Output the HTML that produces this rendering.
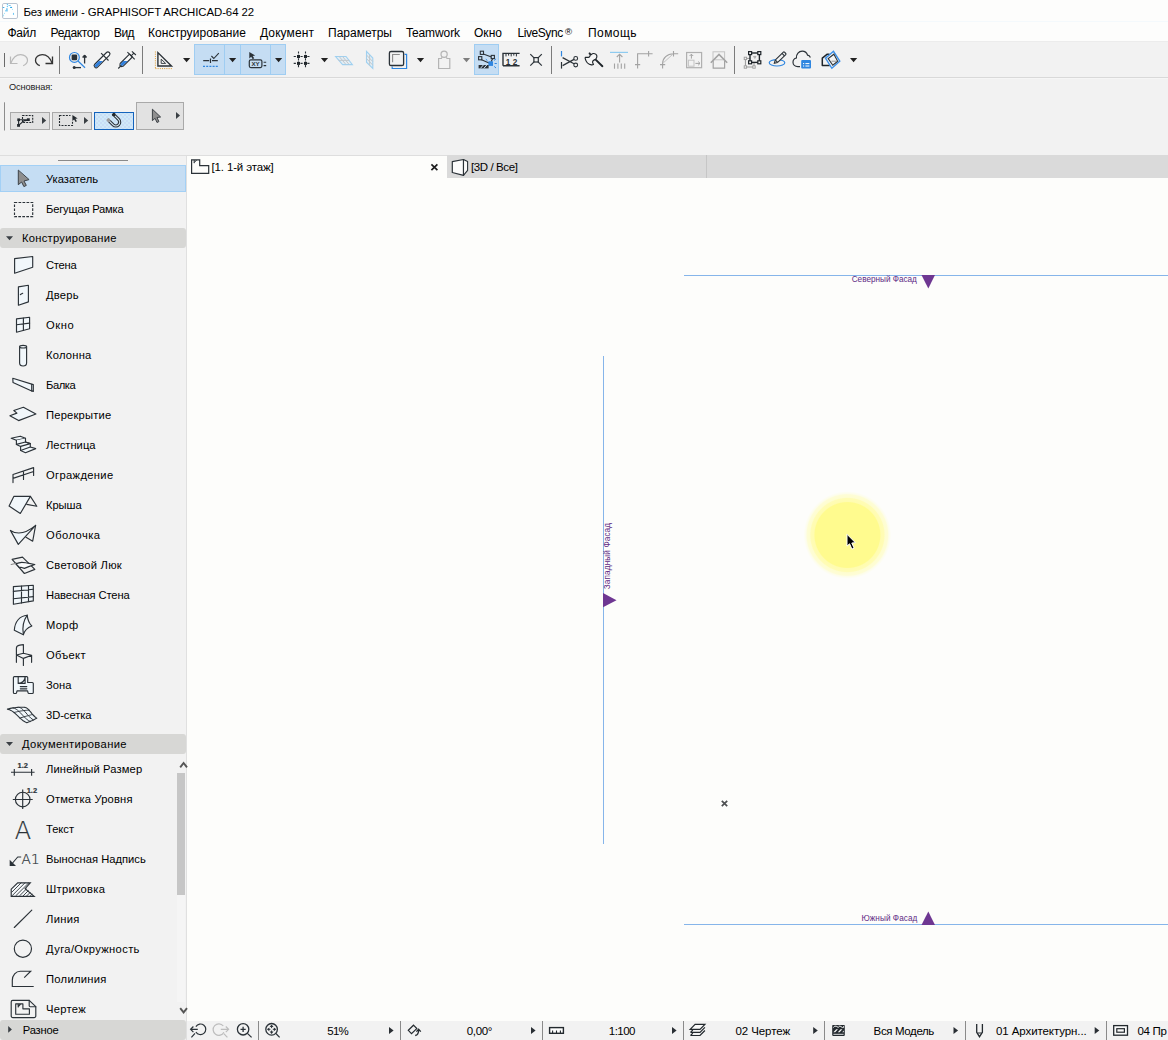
<!DOCTYPE html>
<html lang="ru"><head><meta charset="utf-8"><title>ARCHICAD</title>
<style>
html,body{margin:0;padding:0;}
body{width:1168px;height:1040px;overflow:hidden;background:#fdfdfb;font-family:"Liberation Sans",sans-serif;}
#app{position:relative;width:1168px;height:1040px;overflow:hidden;background:#fdfdfb;}
.b{position:absolute;box-sizing:border-box;}
.t{position:absolute;white-space:nowrap;line-height:16px;height:16px;}
#ov{position:absolute;left:0;top:0;}

</style></head>
<body>
<div id="app">
<!-- title + menu -->
<div class="b" style="left:0;top:0;width:1168px;height:42px;background:#fdfdfc"></div>
<div class="b" style="left:0;top:21px;width:1168px;height:1px;background:#f4f9fc"></div>
<!-- toolbar -->
<div class="b" style="left:0;top:41px;width:1168px;height:1px;background:#ececec"></div>
<div class="b" style="left:0;top:42px;width:1168px;height:114px;background:#f2f2f2"></div>
<div class="b" style="left:0;top:77px;width:1168px;height:1px;background:#d9d9d9"></div>
<div class="b" style="left:0;top:78px;width:1168px;height:1px;background:#f6f6f6"></div>
<div class="b" style="left:0;top:155px;width:1168px;height:1px;background:#dedede"></div>
<!-- toolbar active buttons -->
<div class="b" style="left:194px;top:44px;width:92px;height:31px;background:#c5ddf3;border:1px solid #9fcdf2"></div>
<div class="b" style="left:224px;top:44px;width:1px;height:31px;background:#9fcdf2"></div>
<div class="b" style="left:240px;top:44px;width:1px;height:31px;background:#9fcdf2"></div>
<div class="b" style="left:270px;top:44px;width:1px;height:31px;background:#9fcdf2"></div>
<div class="b" style="left:474px;top:44px;width:25px;height:31px;background:#c5ddf3;border:1px solid #9fcdf2"></div>
<!-- left toolbox -->
<div class="b" style="left:0;top:156px;width:187px;height:884px;background:#f2f2f2;border-right:1px solid #e0e0e0"></div>
<div class="b" style="left:58px;top:160px;width:70px;height:1px;background:#8a8a8a"></div>
<div class="b" style="left:0;top:165px;width:186px;height:27px;background:#c5ddf3;border:1px solid #a3d0f5"></div>
<div class="b" style="left:0;top:228px;width:186px;height:20px;background:#d7d7d5;border-radius:3px"></div>
<div class="b" style="left:0;top:734px;width:186px;height:20px;background:#d7d7d5;border-radius:3px"></div>
<div class="b" style="left:0;top:1020px;width:186px;height:20px;background:#d7d7d5;border-radius:3px"></div>
<!-- toolbox scrollbar -->
<div class="b" style="left:177px;top:895px;width:8px;height:107px;background:#f5f5f5"></div>
<div class="b" style="left:177px;top:773px;width:8px;height:122px;background:#c6c6c6"></div>
<!-- tab bar -->
<div class="b" style="left:187px;top:156px;width:260px;height:22px;background:#fdfdfb"></div>
<div class="b" style="left:447px;top:155px;width:721px;height:23px;background:#dadada"></div>
<div class="b" style="left:706px;top:155px;width:1px;height:23px;background:#c6c6c6"></div>
<!-- status bar -->
<div class="b" style="left:187px;top:1021px;width:981px;height:19px;background:#f2f2f2"></div>

<svg id="ov" width="1168" height="1040" viewBox="0 0 1168 1040" fill="none">
<!-- canvas lines -->
<g shape-rendering="crispEdges" stroke="#86b5ea" stroke-width="1">
<line x1="684" y1="275.5" x2="1168" y2="275.5"/>
<line x1="684" y1="924.5" x2="1168" y2="924.5"/>
<line x1="603.5" y1="356" x2="603.5" y2="844"/>
</g>
<g fill="#6e3792">
<polygon points="921.5,275 935,275 928.3,288.5"/>
<polygon points="921.5,925 935,925 928.3,911.5"/>
<polygon points="603,593 603,607.3 616.5,600.2"/>
</g>
<!-- cursor highlight -->
<defs><radialGradient id="yg" cx="0.5" cy="0.5" r="0.5"><stop offset="0" stop-color="#fffb8e"/><stop offset="0.74" stop-color="#fffb8e"/><stop offset="0.765" stop-color="#fffcb0"/><stop offset="0.835" stop-color="#fffcb6"/><stop offset="0.86" stop-color="#fefdd0"/><stop offset="0.92" stop-color="#fefdd6"/><stop offset="0.945" stop-color="#fdfdea"/><stop offset="1" stop-color="#fdfdfb"/></radialGradient></defs>
<circle cx="847.4" cy="535" r="43.800" fill="url(#yg)"/>


<!-- ===== title icon ===== -->
<rect x="2.500" y="3.500" width="15" height="15" rx="1.400" fill="#fff" stroke="#b9c3d0" stroke-width="1"/>
<g fill="#6ec6f4"><circle cx="7.400" cy="4.500" r=".700"/><circle cx="7.400" cy="6.500" r=".700"/><ellipse cx="3.600" cy="7.500" rx=".900" ry=".600" fill="#2ea8e6"/><ellipse cx="9.700" cy="5.500" rx="1.300" ry=".500"/><ellipse cx="11.100" cy="7.400" rx="1.100" ry=".600" fill="#2ea8e6"/>
<path d="M6 8.200h1.800v3.400h-2.600v-1.600h.8z" fill="#7fcdf6"/><circle cx="12.500" cy="9.400" r=".600" fill="#a6e4f8"/><circle cx="4.500" cy="13.400" r=".600" fill="#a6e4f8"/><ellipse cx="13.500" cy="13.900" rx=".600" ry="1.100"/><ellipse cx="3.500" cy="15.600" rx=".600" ry="1" fill="#a6e4f8"/></g>
<!-- ===== main toolbar ===== -->
<g stroke-linecap="butt" stroke-linejoin="miter">
<!-- grips & separators -->
<path d="M4.5 53v14" stroke="#6a6a6a" stroke-width="1"/>
<path d="M59.5 46v28M142.5 46v28M551.5 46v28M734.5 46v28" stroke="#7b7b7b" stroke-width="1"/>
<!-- undo (disabled) -->
<path d="M10.5 56.5v7h7" stroke="#b9b9b9" stroke-width="1.2"/>
<path d="M10.8 63.2C13 57.5 17 54.6 20.6 54.6c4 0 6.9 2.6 6.9 5.7 0 2.3-1.7 4.3-4.3 5.4" stroke="#b9b9b9" stroke-width="1.2"/>
<!-- redo -->
<path d="M52.5 56.5v7h-7" stroke="#333" stroke-width="1.3"/>
<path d="M52.2 63.2C50 57.5 46 54.6 42.4 54.6c-4 0-6.9 2.6-6.9 5.7 0 2.3 1.7 4.3 4.3 5.4" stroke="#333" stroke-width="1.3"/>
<!-- find & select -->
<circle cx="74.4" cy="57.4" r="4.9" stroke="#2f86e0" stroke-width="1.2"/>
<rect x="71.6" y="54.6" width="5.6" height="5.6" rx="1.2" fill="#2b3238"/>
<path d="M78 61l7 6.8" stroke="#2f86e0" stroke-width="1.2"/>
<path d="M84.6 63.5v-7" stroke="#2b3238" stroke-width="1.3"/><circle cx="84.6" cy="56.2" r="1.5" fill="#2b3238"/><path d="M82.3 57h4.6" stroke="#2b3238" stroke-width="1.2"/>
<path d="M81 67.6h-7" stroke="#2b3238" stroke-width="1.3"/><circle cx="74.2" cy="67.6" r="1.5" fill="#2b3238"/>
<!-- eyedropper -->
<defs><clipPath id="liq"><rect x="90" y="61.100" width="50" height="10"/></clipPath></defs>
<g transform="translate(102.050 59.800) rotate(45)">
<rect x="-2" y="-10.300" width="4" height="20.600" rx="2" fill="#fafafa" stroke="#2b3238" stroke-width="1.150"/>
</g>
<g clip-path="url(#liq)"><g transform="translate(102.050 59.800) rotate(45)"><rect x="-1.450" y="-9" width="2.900" height="18.750" rx="1.450" fill="#2f7fdc"/></g></g>
<path d="M101.100 53.100l7.400 7.400" stroke="#2b3238" stroke-width="1.150"/>
<!-- syringe -->
<g transform="translate(125.900 60.600) rotate(45)">
<path d="M-2 -7.100h4v13.200l-1.200 1.600h-1.600l-1.200-1.600z" fill="#fafafa" stroke="#2b3238" stroke-width="1.100" stroke-linejoin="round"/>
</g>
<g clip-path="url(#liq)"><g transform="translate(125.900 60.600) rotate(45)"><path d="M-1.450 -6h2.900v11.900l-.9 1.200h-1.100l-.9-1.200z" fill="#2f7fdc"/></g></g>
<path d="M127.400 52.200l7.300 7.200M131.100 55.800l2.800-2.700M131.900 51.300l4 3.700M121.300 65.400l-3 3.100" stroke="#2b3238" stroke-width="1.100"/>
<!-- set square -->
<path d="M157.9 52.6v13.4h13.6z" stroke="#2b3238" stroke-width="1.4" stroke-linejoin="miter"/>
<path d="M161.2 59.2v4.2h4.4z" stroke="#2b3238" stroke-width="0.9"/>
<path d="M155.4 51.5v17M155.4 68.6h17" stroke="#e09a2c" stroke-width="1" stroke-dasharray="1 1.2"/>
<!-- dropdown arrows -->
<g fill="#222">
<path d="M183 58h7.2l-3.6 4.2z"/><path d="M229 58h7.2l-3.6 4.2z"/><path d="M275 58h7.2l-3.6 4.2z"/><path d="M320.9 58h7.2l-3.6 4.2z"/><path d="M416.9 58h7.2l-3.6 4.2z"/><path d="M850 58h7.2l-3.6 4.2z"/>
</g>
<path d="M462.9 58h7.2l-3.6 4.2z" fill="#7e7e7e"/>
<!-- guide line button -->
<path d="M203.2 60.6h6M212 60.6h5.8M210.5 58.4v4.6" stroke="#2b3238" stroke-width="1.2"/>
<path d="M211.4 56l2.4 2.5 5-5.4" stroke="#2b3238" stroke-width="1.1"/>
<path d="M203 66.4h15.4" stroke="#2f86e0" stroke-width="1.1" stroke-dasharray="2 1.2"/>
<!-- tracker XY -->
<path d="M249.300 52v6.400l1.900-1.600 1.500 2.400 1.500-.9-1.500-2.400 2.500-.4z" fill="#2b3238"/>
<rect x="249.3" y="59.8" width="12.6" height="7.8" rx="1.5" stroke="#2b3238" stroke-width="1.2"/>
<path d="M263.6 62.2h2.6M263.6 65.6h2.6" stroke="#2b3238" stroke-width="1.1"/>
<!-- grid snap -->
<g stroke="#2b3238" stroke-width="1.1" stroke-dasharray="2.2 1.2">
<path d="M298.5 51.4v17.2M305.5 51.4v17.2M293.7 56.5h17M293.7 63.4h17"/>
</g>
<g fill="#1f252a"><rect x="297" y="55" width="3" height="3"/><rect x="304" y="55" width="3" height="3"/><rect x="297" y="61.9" width="3" height="3"/><rect x="304" y="61.9" width="3" height="3"/></g>
<!-- floor plane grid (disabled) -->
<path d="M335.6 56.5h10.4l6.4 8.1h-9.8z" stroke="#9fd0f0" stroke-width="1.1" fill="#e4eef5"/>
<path d="M339.2 56.5l6.8 8.1M342.6 56.5l6.6 8.1M338.6 60.4h10.6" stroke="#c2c8cc" stroke-width="1"/>
<path d="M366.5 51.4l6.3 6.6v10.5l-6.3-6.3z" stroke="#9fd0f0" stroke-width="1.1" fill="#e4eef5"/>
<path d="M369.6 54.8v10.6M366.5 55l6.3 6.6M366.5 58.6l6.3 6.5" stroke="#c2c8cc" stroke-width="1"/>
<!-- trace -->
<path d="M404.6 54.4h2v14.1h-14.4v-2" stroke="#2f86e0" stroke-width="1.2"/>
<rect x="389.4" y="51.5" width="14.2" height="14" rx="1.6" stroke="#2b3238" stroke-width="1.300"/>
<path d="M392.6 62.3v-7.8h7.2" stroke="#8c8c8c" stroke-width="1.1"/>
<!-- person (disabled) -->
<circle cx="444.1" cy="54.3" r="3.1" stroke="#b4b4b4" stroke-width="1.2"/>
<path d="M442 57.2l-.6 1.3h-2.8v10h11.2v-10h-2.8l-.6-1.3" stroke="#b4b4b4" stroke-width="1.2"/>
</g>


<text x="255.6" y="66" font-family="Liberation Sans, sans-serif" font-size="6.2" font-weight="bold" fill="#2b3238" text-anchor="middle">XY</text>
<!-- ===== toolbar part 2 ===== -->
<g stroke-linecap="butt">
<!-- element snap (active) -->
<path d="M482 53.6l10.8 4-0 0M481 57.4l0 0M481 59.4l8 3.5M492.6 58.8l-1.5 3" stroke="#2b3238" stroke-width="1.1"/>
<g fill="#c5ddf3" stroke="#2b3238" stroke-width="1.1"><rect x="480.3" y="51.2" width="3.2" height="3.2"/><rect x="491.2" y="55.4" width="3.2" height="3.2"/><rect x="478.6" y="56.6" width="3.2" height="3.2"/></g>
<rect x="488.4" y="61.3" width="4.6" height="4.6" fill="#2f86e0"/>
<path d="M494.2 60.4l1.8-1.6M494.6 63.5h2.2M494.2 66.4l1.8 1.6M487.4 60.6l-1.6-1.4" stroke="#2f86e0" stroke-width="1"/>
<path d="M478.6 65h10v3.4h-10z" fill="#2b3238"/>
<path d="M480.4 68.4l3-3.4M483.8 68.4l3-3.4" stroke="#c5ddf3" stroke-width="1"/>
<!-- ruler -->
<path d="M503 65.8v-12.4h16.6M503 65.8h16.6" stroke="#2b3238" stroke-width="1.4"/>
<path d="M506 53.4v3M508.6 53.4v2.2M511.2 53.4v3M513.8 53.4v2.2M516.4 53.4v3" stroke="#2b3238" stroke-width="1"/>
<!-- X -->
<path d="M530.3 54.1l4 4M541.8 54.1l-4 4M530.3 65.6l4-4M541.8 65.6l-4-4" stroke="#2b3238" stroke-width="1.2"/>
<rect x="533.9" y="57.6" width="4.4" height="4.4" stroke="#2b3238" stroke-width="1.2"/>
<!-- scissors -->
<path d="M561.5 51v5.4" stroke="#2f86e0" stroke-width="1.2"/><path d="M561.5 62v6.6" stroke="#2b3238" stroke-width="1.2"/>
<path d="M562.6 57.6l11.4 6.2M562.6 65.6l11.4-6.2" stroke="#2b3238" stroke-width="1.2"/>
<circle cx="575.7" cy="58.4" r="1.9" stroke="#2b3238" stroke-width="1.1"/><circle cx="575.7" cy="65" r="1.9" stroke="#2b3238" stroke-width="1.1"/>
<!-- axe -->
<path d="M595.4 59.4l7 6.800" stroke="#1f252a" stroke-width="1.900" stroke-linecap="round"/>
<path d="M589.600 53.400l1.400 1.300c1.200-1 2-1.300 2.900-1.200 1.300.2 2.400.7 2.800 1.700.5 1.300.1 2.500-.6 3.400l-1.200 1c-1 .4-1.900.8-2.200 1.600-.3.900-.2 1.900.8 3.100-.5.500-1.200.700-2 .600-2.600-.300-5.300-2.400-6.300-6.300 0-.5 0-.9.100-1.200h3.100c.8-.100 1.300-.600 1.600-1.300.3-.600.300-1.100.100-1.500z" stroke="#1f252a" stroke-width="1.150" stroke-linejoin="round" fill="#f6f6f6"/>
<circle cx="589.600" cy="53.500" r="1" fill="#1f252a"/>
<!-- adjust (disabled) -->
<path d="M610 52.4h18" stroke="#8ecbf0" stroke-width="1.2"/>
<path d="M619.6 62.4v-8M616.8 57l2.800-2.800 2.800 2.800" stroke="#a3a3a3" stroke-width="1.1"/>
<path d="M614.5 63.400v5.400M617.900 63.400v5.400M621.300 63.400v5.400M624.700 63.400v5.400" stroke="#a3a3a3" stroke-width="1.1"/>
<!-- fillet corner -->
<path d="M637.600 68.600v-14.800h15M648.600 51v5.400M635 64.600h5.200" stroke="#a3a3a3" stroke-width="1.1"/>
<!-- arc -->
<path d="M662.600 68.600v-5c0-5.400 4.600-9.800 10.800-9.800h4.800M673.500 51v5.400M660 64.600h5.200" stroke="#a3a3a3" stroke-width="1.1"/>
<path d="M663.400 62.800l9-8.200" stroke="#bdbdbd" stroke-width="0.9"/>
<!-- box arrows -->
<rect x="686.600" y="52.500" width="15" height="15.200" stroke="#b0b0b0" stroke-width="1.2"/>
<rect x="688.400" y="60.200" width="5.600" height="6" stroke="#c4c4c4" stroke-width="1"/>
<path d="M691.400 58.600v-4.400M689.600 56l1.800-1.800 1.800 1.800M695.400 63.400h4.600M698.200 61.600l1.800 1.800-1.800 1.800" stroke="#a3a3a3" stroke-width="1"/>
<!-- house -->
<rect x="713" y="51.800" width="11.600" height="8" stroke="#c4c4c4" stroke-width="1"/>
<path d="M710.800 62.800l8.200-8.400 8.200 8.400" stroke="#a3a3a3" stroke-width="1.600"/>
<path d="M713.200 61v7.200h11.400v-7.200" stroke="#a3a3a3" stroke-width="1.200"/>
<!-- select box -->
<rect x="745.400" y="58.400" width="8.600" height="8.600" stroke="#9a9a9a" stroke-width="1"/>
<g fill="#f2f2f2" stroke="#9a9a9a" stroke-width="0.9"><rect x="744.200" y="57.200" width="2.400" height="2.400"/><rect x="744.200" y="65.800" width="2.400" height="2.400"/><rect x="752.800" y="65.800" width="2.400" height="2.400"/></g>
<rect x="750" y="53" width="9.400" height="9.400" fill="#f2f2f2" stroke="#1f252a" stroke-width="1.400"/>
<g fill="#f2f2f2" stroke="#1f252a" stroke-width="1.200"><rect x="748.600" y="51.600" width="3" height="3"/><rect x="757.800" y="51.600" width="3" height="3"/><rect x="748.600" y="60.800" width="3" height="3"/><rect x="757.800" y="60.800" width="3" height="3"/></g>
<path d="M753.600 56.400h2.400l-1.200 2z" stroke="#9a9a9a" stroke-width="0.8"/>
<!-- pen with ellipse -->
<ellipse cx="777" cy="62.800" rx="7.800" ry="3.200" stroke="#2f86e0" stroke-width="1.200"/>
<g transform="translate(779.800 58) rotate(46)"><rect x="-1.700" y="-7.400" width="3.400" height="12" rx="0.800" fill="#f2f2f2" stroke="#2b3238" stroke-width="1.100"/><path d="M-1.700 4.600l1.700 3 1.700-3M-1.700 -4.800h3.400" stroke="#2b3238" stroke-width="1.100"/></g>
<!-- cloud -->
<path d="M800 66.600h-2.200c-2.800 0-4.800-2-4.800-4.400 0-2.200 1.600-3.800 3.400-4.200-.2-3.800 2.400-6.800 5.800-6.800 2.600 0 4.600 1.600 5.400 4 1.200.2 2.200 1 2.800 2.200" stroke="#2b3238" stroke-width="1.200"/>
<rect x="801.200" y="60" width="9.800" height="8.400" rx="1" fill="#2f86e0"/>
<path d="M803 63.600h1.200M805.400 63.600h4M803 66h1.200M805.400 66h4" stroke="#fff" stroke-width="1"/>
<!-- 3d box -->
<path d="M829.800 65.500h-7.500v-7.300l5-4h2.200" stroke="#1f252a" stroke-width="1.500" stroke-linejoin="round"/>
<path d="M833.500 51.300l6.300 9.900-7.950 7.100-6.350-10.100z" stroke="#3b8fe8" stroke-width="1.400" fill="#f4f4f4"/>
<path d="M833.900 54.200l3.800 7.100-4.900 3.900-4.600-6.700z" stroke="#2b3238" stroke-width="1.100"/>
<path d="M831.400 61.200h5.800" stroke="#8a8a8a" stroke-width="0.900"/>
</g>
<text x="505.700" y="64.700" font-family="Liberation Sans, sans-serif" font-size="8.200" font-weight="bold" fill="#2b3238" letter-spacing="2.600">12</text>


<!-- ===== info box ===== -->
<path d="M4.500 102.300v28.200" stroke="#8d8d8d" stroke-width="1"/>
<g fill="#e2e2e2" stroke="#a9a9a9" stroke-width="1">
<rect x="10.500" y="112.500" width="39" height="17"/>
<rect x="52.500" y="112.500" width="39" height="17"/>
<rect x="136.500" y="102.500" width="47" height="27"/>
</g>
<defs><pattern id="chk" width="4" height="4" patternUnits="userSpaceOnUse"><rect width="4" height="4" fill="#c9ddf6"/><rect width="2" height="2" fill="#cfeaf8"/><rect x="2" y="2" width="2" height="2" fill="#cfeaf8"/></pattern></defs>
<rect x="94.500" y="112.500" width="39" height="17" fill="url(#chk)" stroke="#1464bd" stroke-width="1"/>
<g fill="#3a3f44"><path d="M42 117v7l4.200-3.500z"/><path d="M84 117v7l4.200-3.500z"/><path d="M176 112v7l4-3.500z"/></g>
<!-- icon 1: polygon marquee -->
<rect x="22.500" y="115.500" width="10.200" height="7" stroke="#23292e" stroke-width="1.100" stroke-dasharray="2 1.100"/>
<path d="M18.600 119.700h9.800M18.600 119.700v5.600M18.600 125.300l5-4.300 4.200-.9" stroke="#23292e" stroke-width="1.100"/>
<g fill="#23292e"><rect x="17.300" y="118.400" width="2.700" height="2.700"/><rect x="26.900" y="118.300" width="2.900" height="2.700"/><rect x="17.100" y="124" width="2.900" height="2.800"/></g>
<!-- icon 2: marquee + cursor -->
<rect x="59.500" y="115.500" width="13" height="10" stroke="#23292e" stroke-width="1.100" stroke-dasharray="2 1.200"/>
<rect x="70.500" y="113.800" width="7" height="7.500" fill="#e2e2e2"/>
<path d="M72.400 115v6l1.700-1.500 1.500 2.500 1.300-.8-1.500-2.400 2.300-.4z" fill="#23292e"/>
<!-- icon 3: magnet -->
<g transform="translate(115.300 121.600) rotate(-45)">
<path d="M-3.800 -4.600v5.400a3.800 3.800 0 0 0 7.600 0v-5.400" stroke="#2b3238" stroke-width="3.200" fill="none"/>
<path d="M-3.800 -4.600v5.400a3.800 3.800 0 0 0 7.600 0v-5.400" stroke="#d9ecf8" stroke-width="1.100" fill="none"/>
<rect x="-5.600" y="-7.600" width="3.600" height="3.400" rx="1.200" fill="#9c9c9c"/>
<rect x="2" y="-7.600" width="3.600" height="3.400" rx="1.200" fill="#23292e"/>
</g>
<!-- icon 4: arrow cursor -->
<path d="M152.400 109.200v11.400l2.700-2.300 1.900 4.200 1.900-.9-1.900-4.100 3.600-.5z" fill="#8f8f8f" stroke="#3c4146" stroke-width="1" stroke-linejoin="round"/>


<!-- ===== tab bar icons ===== -->
<path d="M191.600 159.800h8.100v5.800h9v7.800h-17.100z" fill="#fdfdfb" stroke="#2b3238" stroke-width="1.200"/>
<path d="M194.200 163.200v-3.200M194.200 162.600l2.400-2.600" stroke="#2b3238" stroke-width="1"/>
<path d="M431.400 164.400l6 5.800M437.400 164.400l-6 5.800" stroke="#1d1d1d" stroke-width="1.700"/>
<path d="M452.300 161.600l11.200-2.100v15.900l-11.200-2.900z" fill="#fbfbfb" stroke="#2b3238" stroke-width="1.200" stroke-linejoin="round"/>
<path d="M463.500 159.500l4.100 2.100v8.700l-4.100 5.100z" fill="#fbfbfb" stroke="#2b3238" stroke-width="1.100" stroke-linejoin="round"/>
<!-- ===== status bar ===== -->
<g shape-rendering="crispEdges" stroke="#8a8a8a" stroke-width="1">
<path d="M258.500 1021v19M400.500 1021v19M542.500 1021v19M683.500 1021v19M824.500 1021v19M965.500 1021v19M1106.500 1021v19"/>
</g>
<g fill="#2a2f34"><path d="M389 1027v7l4.600-3.500z"/><path d="M531 1027v7l4.600-3.500z"/><path d="M672 1027v7l4.600-3.500z"/><path d="M813.200 1027v7l4.600-3.500z"/><path d="M953.500 1027v7l4.600-3.500z"/><path d="M1094.700 1027v7l4.600-3.500z"/></g>
<!-- prev zoom -->
<path d="M195.900 1026.600a5.300 5.300 0 1 1 0 5.400" stroke="#2b3238" stroke-width="1.200"/>
<path d="M190.600 1029.300h7.200M193.400 1026.500l-2.800 2.800 2.800 2.800M195 1033.400l-3.600 4" stroke="#2b3238" stroke-width="1.200"/>
<!-- next zoom (disabled) -->
<path d="M223.300 1026a5.700 5.700 0 1 0 0.600 6.200" stroke="#bdbdbd" stroke-width="1.200"/>
<path d="M220.800 1029.300h7.800M225.800 1026.500l2.800 2.800-2.800 2.800M223.800 1033.600l3.600 3.800" stroke="#bdbdbd" stroke-width="1.200"/>
<!-- zoom in -->
<circle cx="243.100" cy="1029.300" r="5.700" stroke="#2b3238" stroke-width="1.300"/>
<path d="M240.500 1029.300h5.200M243.100 1026.700v5.200M247.400 1033.400l4.200 4" stroke="#2b3238" stroke-width="1.300"/>
<!-- fit -->
<circle cx="271.600" cy="1029.300" r="5.800" stroke="#2b3238" stroke-width="1.300"/>
<path d="M275.800 1033.400l3.800 4" stroke="#2b3238" stroke-width="1.300"/>
<g fill="#2b3238"><path d="M271.600 1024.600l1.900 2.400h-3.800z"/><path d="M271.600 1034l1.900-2.400h-3.800z"/><path d="M266.900 1029.300l2.400-1.900v3.800z"/><path d="M276.300 1029.300l-2.400-1.900v3.800z"/></g><path d="M271.600 1026.500v1.600M271.600 1030.500v1.600M268.800 1029.300h1.600M272.800 1029.300h1.600" stroke="#2b3238" stroke-width="1"/>
<!-- rotation -->
<path d="M413.500 1025.200l3.300 3.400-5.300 5.100-3.200-3.400z" stroke="#23292e" stroke-width="1.200"/>
<path d="M415.200 1035.500c2.400-.4 3.500-2.400 3.400-5.800M416.400 1031.600l2.200-2.300 2.200 2.300" stroke="#23292e" stroke-width="1.300"/>
<!-- scale ruler -->
<rect x="549.600" y="1027.600" width="13.800" height="5.700" fill="#fff" stroke="#23292e" stroke-width="1.400"/>
<path d="M552.600 1033v-2.400M556.500 1033v-2.400M560.400 1033v-2.400" stroke="#23292e" stroke-width="1.100"/>
<!-- layers -->
<g stroke="#23292e" stroke-width="1.200" stroke-linejoin="miter">
<path d="M690.600 1035.500h9.400l4.900-5"/>
<path d="M690.600 1032.400h9.400l4.900-5"/>
<path d="M695.100 1024.300h9.800l-4.900 5h-9.800z" fill="#fafafa"/>
<path d="M692.800 1030l-2.200 2.400M692.800 1033.100l-2.200 2.400"/>
</g>
<!-- clapper -->
<rect x="832.200" y="1025" width="12.600" height="10.900" rx="0.800" fill="#23292e"/>
<path d="M833.400 1027.600l1.200-1.400h1.600l2.400 1.400M838.600 1026.200h1.600l2.400 1.400 1-.2v-1.200" stroke="#f4f4f4" stroke-width="1"/>
<path d="M833.400 1032.200l2.800-3h1.800l-2.800 3zM837.800 1032.200l2.800-3h1.800l-2.800 3zM842.200 1032.200l1.600-1.800v1.800z" fill="#f4f4f4"/>
<path d="M833.400 1034.300h10.200" stroke="#f4f4f4" stroke-width="0.900"/>
<!-- pen -->
<path d="M976.700 1024v8.400l2.800 4.300 2.900-4.300v-8.400" stroke="#23292e" stroke-width="1.300"/>
<path d="M977.400 1033h4.400" stroke="#23292e" stroke-width="1"/>
<!-- frame -->
<rect x="1113.700" y="1025.600" width="13.800" height="9.600" fill="#fafafa" stroke="#23292e" stroke-width="1.300"/>
<rect x="1116.800" y="1028.700" width="7.600" height="3.500" stroke="#23292e" stroke-width="1.200"/>


<!-- ===== toolbox icons ===== -->
<g stroke="#2b3238" stroke-width="1.150" stroke-linejoin="round" stroke-linecap="round" fill="none">
<!-- pointer -->
<path d="M18.300 170.500v14.200l3.300-2.700 2.300 4.600 2.400-1.200-2.300-4.400 4.700-1.300z" fill="#8e8e8e" stroke="#3c4146" stroke-width="1"/>
<!-- marquee -->
<rect x="14.500" y="202.500" width="18.200" height="14.100" stroke-dasharray="2.700 1.300" stroke-linecap="butt" stroke-linejoin="miter"/>
<!-- wall -->
<path d="M14.600 258.600l18.100-2.100v10.800l-18.100 5.900z" fill="#f1f7fb"/>
<!-- door -->
<path d="M18.400 286.900l10-1.600v16.600l-10 3.300z" fill="#f1f7fb"/><path d="M20.400 294.600l2.300-1.300"/>
<!-- window -->
<path d="M16.500 318.900l13.100-1.600v11.400l-13.100 3.500z" fill="#f1f7fb"/><path d="M23.400 318.100v12.400M16.500 324.800l13.100-1.700"/>
<!-- column -->
<path d="M19.600 346.700v16.300c0 1.700 1.500 3 3.500 3s3.500-1.300 3.500-3v-16.300" fill="#f1f7fb"/><ellipse cx="23.100" cy="346.700" rx="3.500" ry="1.300" fill="#f1f7fb"/>
<!-- beam -->
<path d="M12.800 378.300l20.500 6.300v6.800l-1.600-.5-18.700-8.500z" fill="#f1f7fb"/><path d="M31.700 384.300v6.600"/>
<!-- slab -->
<path d="M9.900 415.700l7-2.600-3.100-2.600 9.600-3.200 12.500 6.700-17.300 6.600z" fill="#f1f7fb"/>
<!-- stair -->
<path d="M11.200 438.200l9.100-2 5.200 2-9.100 2z" fill="#f1f7fb"/>
<path d="M16.400 440.200v4.200l4.200 2v4.100l4.900 2.200 10.200-4.100-5.400-1.600v-3.400l-4.800-1.600v-3.600" fill="#f1f7fb"/>
<path d="M16.400 444.400l9.100-2.400M20.600 446.400l9.700-2.800M20.600 450.500l9.700-3.500M25.500 442l4.800 1.600M30.300 447l-0 0"/>
<!-- railing -->
<path d="M13 482.600v-8.100l20.600-6.900v7.800M13 478.400l20.600-6.900M23.500 471v8.500"/>
<!-- roof -->
<path d="M9.100 506.100l4.700-9.700h16.600l-10.100 17.100z" fill="#f1f7fb"/><path d="M30.400 496.400l6.400 9.900-10-1.900"/>
<!-- shell -->
<path d="M10.400 530.400c6 4 15 3.500 25.200-5l-17.300 19z" fill="#f1f7fb"/><path d="M35.600 525.400l-2.900 15.800-6.700-3.900"/>
<!-- skylight -->
<path d="M12.100 559.400l10.400-2.300 12.350 12.300-10.450 4.100z"/>
<path d="M15.500 563.400c2.500.2 4-1.100 6.200-1.100 2.800 0 4.300.7 6 .8l7.150 1.400-5.450 1.900-5 2-3.500-1.100-1.500.2z" fill="#fbfcfd"/>
<path d="M11.200 564.500l4.300-1" stroke="#8a8a8a"/>
<!-- curtain wall -->
<path d="M13.400 586.600l19.900-1.300v15.600l-19.900 3.400z" fill="#f1f7fb"/><path d="M21.500 586.100v16.800M28.500 585.600v16M13.400 591.400l19.900-2.200M13.400 598.700l19.900-2.100"/>
<!-- morph -->
<path d="M27.200 615.200c-7.500.6-12.400 6.500-12.900 15.100l9.100 4.400c1-3.800 4-7 8.400-8.700-2.600-2.600-4.100-6.200-4.600-10.800z" fill="#f1f7fb"/><path d="M27.200 615.200c-3.800 5.500-5.200 12-3.800 19.500"/>
<!-- chair -->
<path d="M16.400 662.300v-14.400c0-1.600 1.200-2.400 3.400-2.800l3.600-.5v8.700M16.400 655l7-1.700 8.200 1.900-8.200 3.200zM23.400 658.400v7M31.600 655.200v7.100"/>
<!-- zone -->
<path d="M14.400 676.600h12.300c.6 0 1 .4 1 1v4.900h4.600c.6 0 1 .4 1 1v9c0 .6-.4 1-1 1h-3.300c-.5 0-.9-.3-1-.8l-.4-1.800h-10.600l-.4 1.800c-.1.500-.5.800-1 .8h-1.200c-.6 0-1-.4-1-1v-14.900c0-.6.400-1 1-1z" fill="#f1f7fb"/>
<path d="M18.200 676.800v6.600h6.900v-6.600M18.200 683.400c3.900 0 6.900-2.800 6.900-6.600M20.300 686.600h6.500M20.300 688.800h6.500"/>
<!-- mesh -->
<path d="M7.4 709.1L8.8 708.7L10.2 708.4L11.7 708.1L13.1 707.9L14.6 707.7L16.1 707.5L17.5 707.4L19.0 707.3L20.5 707.3L22.1 707.3L23.6 707.3L25.1 707.4L25.1 707.4L26.2 707.8L27.2 708.4L28.1 709.2L29.0 710.1L29.9 711.2L30.8 712.2L31.7 713.4L32.6 714.5L33.6 715.5L34.6 716.5L35.6 717.4L36.8 718.2L36.8 718.2L36.0 718.6L35.1 719.1L34.3 719.5L33.5 719.9L32.6 720.3L31.8 720.7L30.9 721.0L30.1 721.4L29.2 721.7L28.4 722.1L27.6 722.4L26.8 722.7L26.8 722.7L24.9 721.8L23.2 720.7L21.5 719.4L20.0 718.1L18.5 716.6L17.0 715.2L15.6 713.8L14.1 712.5L12.5 711.4L10.9 710.4L9.2 709.6L7.4 709.1z" fill="#f1f7fb" stroke-width="1.100"/>
<path d="M13.1 707.9L14.7 708.4L16.2 709.2L17.6 710.2L18.9 711.4L20.2 712.7L21.5 714.0L22.8 715.4L24.1 716.8L25.5 718.1L26.9 719.4L28.4 720.5L30.1 721.4M19.0 707.3L20.4 707.8L21.6 708.6L22.8 709.5L23.9 710.6L25.0 711.8L26.1 713.0L27.2 714.3L28.3 715.6L29.5 716.8L30.7 718.0L32.0 719.0L33.5 719.9M14.1 712.5L15.3 712.2L16.5 711.9L17.7 711.6L18.9 711.4L20.2 711.1L21.4 710.9L22.7 710.7L23.9 710.6L25.2 710.4L26.5 710.3L27.7 710.2L29.0 710.1M20.0 718.1L21.0 717.7L22.0 717.4L23.1 717.1L24.1 716.8L25.2 716.5L26.2 716.2L27.3 715.9L28.3 715.6L29.4 715.3L30.5 715.0L31.5 714.7L32.6 714.5" stroke-width="0.950"/>
<!-- dimension -->
<path d="M11 772.200h23.600M14.300 769v6.700M31.600 769v6.700" stroke-linecap="butt"/>
<!-- level -->
<circle cx="22.700" cy="799.500" r="7.300"/><path d="M12.800 799.500h19.900M22.700 789.500v19.500" stroke-linecap="butt"/>
<!-- label arrow -->
<path d="M12.600 863l5.100-6h3.500" stroke-linecap="butt"/><path d="M9.700 866v-6.200l6.300 6.200z" fill="#2b3238" stroke="none"/>
<!-- hatch -->
<path d="M11.200 896.400v-7.200l6.500-6.400h12.600l-5.200 5.800 9.100 7.800z" fill="#f6f9fb" stroke-linejoin="miter"/>
<path d="M11.800 892.200l9.300-9.300M12.200 895.600l12.600-12.600M15.800 895.800l12.800-12.800M19.600 895.800l6.800-6.800M23.200 895.800l5-5M26.800 895.800l3.400-3.400M30.400 895.800l1.600-1.600" stroke-width="0.900"/>
<!-- line -->
<path d="M14.300 927.500l17.500-17.300"/>
<!-- circle -->
<circle cx="22.900" cy="948.700" r="8.600"/>
<!-- polyline -->
<path d="M33.700 986.500h-21.400v-6.200c0-5 3.600-9.100 8-9.100h10.400l-6.500 6.500" stroke-linejoin="miter" stroke-linecap="butt"/>
<!-- drawing -->
<path d="M12.700 1000.400h16.500l6.600 6.300v9.400c0 .8-.7 1.500-1.500 1.500h-21.600c-.8 0-1.500-.7-1.500-1.500v-14.200c0-.8.700-1.500 1.500-1.500z"/><path d="M29.200 1000.400v5.400c0 .5.400.9.900.9h5.700"/>
<path d="M15.700 1003.800h7.200v5h6.500v5.400h-13.700zM18.200 1007v-3.200M18.200 1006.600l2.600-2.800"/>
</g>
<!-- section arrows -->
<g fill="#3a3f44"><path d="M6 236.200h7l-3.500 4z"/><path d="M6 742h7l-3.500 4z"/><path d="M8.200 1026v6.800l3.700-3.400z"/></g>
<!-- toolbox scroll chevrons -->
<path d="M180.200 767.400l3.400-4.400 3.400 4.400" stroke="#555" stroke-width="1.900"/>
<path d="M180.200 1008.200l3.400 4.200 3.400-4.200" stroke="#555" stroke-width="1.900"/>
<g font-family="Liberation Sans, sans-serif" font-weight="bold" font-size="7.500" fill="#2b3238" stroke="#2b3238" stroke-width="0.200">
<text x="17.500" y="768.100">1.2</text><text x="26.700" y="793">1.2</text></g>
<g font-family="DejaVu Sans Light, DejaVu Sans, sans-serif" font-weight="200" fill="#2b3238" stroke="#2b3238" stroke-width="0.220">
<text x="22.900" y="838.800" font-size="24" text-anchor="middle">A</text>
<text x="21.600" y="863.600" font-size="13.600">A1</text></g>


<!-- origin marker -->
<path d="M721.800 800.800l5.400 5.400M727.200 800.800l-5.400 5.400" stroke="#4d4f51" stroke-width="1.700"/>
<!-- mouse cursor -->
<path d="M847 534.300v11.800l2.600-2.300 2.300 5.300 2.200-1-2.300-5.100 3.600-.3z" fill="#000" stroke="#fff" stroke-width="1" stroke-linejoin="round"/>
</svg>

<div class="t" style="left:23.4px;top:3.7px;font-size:11.4px;letter-spacing:-0.076px;color:#000;">Без имени - GRAPHISOFT ARCHICAD-64 22</div>
<div class="t" style="left:7.5px;top:24.5px;font-size:12px;letter-spacing:-0.254px;color:#000;">Файл</div>
<div class="t" style="left:50.5px;top:24.5px;font-size:12px;letter-spacing:-0.332px;color:#000;">Редактор</div>
<div class="t" style="left:114.0px;top:24.5px;font-size:12px;letter-spacing:-0.573px;color:#000;">Вид</div>
<div class="t" style="left:148.0px;top:24.5px;font-size:12px;letter-spacing:0.047px;color:#000;">Конструирование</div>
<div class="t" style="left:260.0px;top:24.5px;font-size:12px;letter-spacing:0.096px;color:#000;">Документ</div>
<div class="t" style="left:328.0px;top:24.5px;font-size:12px;letter-spacing:0.003px;color:#000;">Параметры</div>
<div class="t" style="left:406.0px;top:24.5px;font-size:12px;letter-spacing:-0.086px;color:#000;">Teamwork</div>
<div class="t" style="left:474.0px;top:24.5px;font-size:12px;letter-spacing:0.027px;color:#000;">Окно</div>
<div class="t" style="left:517.5px;top:24.5px;font-size:12px;letter-spacing:-0.438px;color:#000;">LiveSync</div>
<div class="t" style="left:588.0px;top:24.5px;font-size:12px;letter-spacing:0.440px;color:#000;">Помощь</div>
<div class="t" style="left:565.0px;top:23.6px;font-size:9.6px;letter-spacing:0.122px;color:#000;">®</div>
<div class="t" style="left:9.0px;top:79.0px;font-size:9.2px;letter-spacing:-0.113px;color:#222;">Основная:</div>
<div class="t" style="left:211.5px;top:159.0px;font-size:11.5px;letter-spacing:-0.144px;color:#000;">[1. 1-й этаж]</div>
<div class="t" style="left:471.0px;top:159.0px;font-size:11.5px;letter-spacing:-0.400px;color:#000;">[3D / Все]</div>
<div class="t" style="left:46.0px;top:171.3px;font-size:11.2px;letter-spacing:-0.017px;color:#000;">Указатель</div>
<div class="t" style="left:46.0px;top:201.3px;font-size:11.2px;letter-spacing:-0.208px;color:#000;">Бегущая Рамка</div>
<div class="t" style="left:46.0px;top:257.3px;font-size:11.2px;letter-spacing:-0.241px;color:#000;">Стена</div>
<div class="t" style="left:46.0px;top:287.3px;font-size:11.2px;letter-spacing:0.226px;color:#000;">Дверь</div>
<div class="t" style="left:46.0px;top:317.3px;font-size:11.2px;letter-spacing:0.550px;color:#000;">Окно</div>
<div class="t" style="left:46.0px;top:347.3px;font-size:11.2px;letter-spacing:0.221px;color:#000;">Колонна</div>
<div class="t" style="left:46.0px;top:377.3px;font-size:11.2px;letter-spacing:-0.414px;color:#000;">Балка</div>
<div class="t" style="left:46.0px;top:407.3px;font-size:11.2px;letter-spacing:0.203px;color:#000;">Перекрытие</div>
<div class="t" style="left:46.0px;top:437.3px;font-size:11.2px;letter-spacing:0.032px;color:#000;">Лестница</div>
<div class="t" style="left:46.0px;top:467.3px;font-size:11.2px;letter-spacing:0.338px;color:#000;">Ограждение</div>
<div class="t" style="left:46.0px;top:497.3px;font-size:11.2px;letter-spacing:-0.057px;color:#000;">Крыша</div>
<div class="t" style="left:46.0px;top:527.3px;font-size:11.2px;letter-spacing:0.435px;color:#000;">Оболочка</div>
<div class="t" style="left:46.0px;top:557.3px;font-size:11.2px;letter-spacing:0.242px;color:#000;">Световой Люк</div>
<div class="t" style="left:46.0px;top:587.3px;font-size:11.2px;letter-spacing:-0.115px;color:#000;">Навесная Стена</div>
<div class="t" style="left:46.0px;top:617.3px;font-size:11.2px;letter-spacing:0.352px;color:#000;">Морф</div>
<div class="t" style="left:46.0px;top:647.3px;font-size:11.2px;letter-spacing:0.282px;color:#000;">Объект</div>
<div class="t" style="left:46.0px;top:677.3px;font-size:11.2px;letter-spacing:0.027px;color:#000;">Зона</div>
<div class="t" style="left:46.0px;top:707.3px;font-size:11.2px;letter-spacing:-0.059px;color:#000;">3D-сетка</div>
<div class="t" style="left:46.0px;top:761.3px;font-size:11.2px;letter-spacing:0.135px;color:#000;">Линейный Размер</div>
<div class="t" style="left:46.0px;top:791.3px;font-size:11.2px;letter-spacing:0.178px;color:#000;">Отметка Уровня</div>
<div class="t" style="left:46.0px;top:821.3px;font-size:11.2px;letter-spacing:-0.034px;color:#000;">Текст</div>
<div class="t" style="left:46.0px;top:851.3px;font-size:11.2px;letter-spacing:0.011px;color:#000;">Выносная Надпись</div>
<div class="t" style="left:46.0px;top:881.3px;font-size:11.2px;letter-spacing:0.260px;color:#000;">Штриховка</div>
<div class="t" style="left:46.0px;top:911.3px;font-size:11.2px;letter-spacing:0.304px;color:#000;">Линия</div>
<div class="t" style="left:46.0px;top:941.3px;font-size:11.2px;letter-spacing:0.358px;color:#000;">Дуга/Окружность</div>
<div class="t" style="left:46.0px;top:971.3px;font-size:11.2px;letter-spacing:0.282px;color:#000;">Полилиния</div>
<div class="t" style="left:46.0px;top:1001.3px;font-size:11.2px;letter-spacing:0.294px;color:#000;">Чертеж</div>
<div class="t" style="left:22.0px;top:230.2px;font-size:11.2px;letter-spacing:0.265px;color:#000;">Конструирование</div>
<div class="t" style="left:22.0px;top:736.2px;font-size:11.2px;letter-spacing:0.368px;color:#000;">Документирование</div>
<div class="t" style="left:22.8px;top:1022.2px;font-size:11.2px;letter-spacing:-0.209px;color:#000;">Разное</div>
<div class="t" style="left:327.3px;top:1022.5px;font-size:11.5px;letter-spacing:-0.777px;color:#000;">51%</div>
<div class="t" style="left:466.8px;top:1022.5px;font-size:11.5px;letter-spacing:-0.357px;color:#000;">0,00°</div>
<div class="t" style="left:608.8px;top:1022.5px;font-size:11.5px;letter-spacing:-0.516px;color:#000;">1:100</div>
<div class="t" style="left:735.5px;top:1022.5px;font-size:11.5px;letter-spacing:-0.089px;color:#000;">02 Чертеж</div>
<div class="t" style="left:873.6px;top:1022.5px;font-size:11.5px;letter-spacing:-0.373px;color:#000;">Вся Модель</div>
<div class="t" style="left:996.0px;top:1022.5px;font-size:11.5px;letter-spacing:-0.085px;color:#000;">01 Архитектурн...</div>
<div class="t" style="left:1137.5px;top:1022.5px;font-size:11.5px;letter-spacing:-0.311px;color:#000;">04 Пр</div>
<div class="t" style="left:851.7px;top:272.2px;font-size:8.2px;letter-spacing:-0.007px;color:#5e2a84;">Северный Фасад</div>
<div class="t" style="left:861.5px;top:910.9px;font-size:8.2px;letter-spacing:0.062px;color:#5e2a84;">Южный Фасад</div>
<div class="t" style="left:608.3px;top:556.2px;font-size:8.2px;letter-spacing:0.119px;color:#5e2a84;transform:translate(-50%,-50%) rotate(-90deg);">Западный Фасад</div>
</div>
</body></html>
